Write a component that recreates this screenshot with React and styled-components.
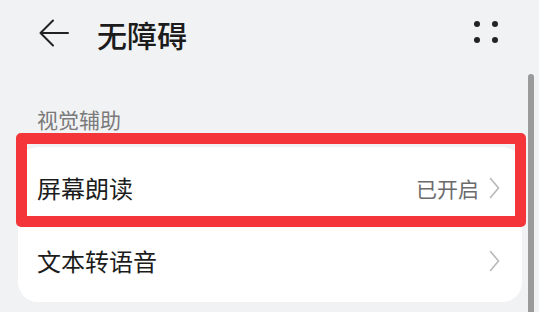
import React from "react"
import styled, { createGlobalStyle } from "styled-components"

const GlobalStyle = createGlobalStyle`
	html, body {
		margin: 0;
		padding: 0;
		background: #f1f2f4;
		font-family: "Noto Sans CJK SC", "Noto Sans", sans-serif;
		overflow: hidden;
	}
`

function App() {
	return (
		<Page>
			<GlobalStyle />
			<Header>
				<BackIcon viewBox="0 0 30 28" aria-hidden="true">
					<path
						d="M14 1.5 L1.5 14 L14 26.5 M1.5 14 H29"
						fill="none"
						stroke="#222"
						strokeWidth="2"
						strokeLinecap="round"
						strokeLinejoin="round"
					/>
				</BackIcon>
				<Title>无障碍</Title>
				<MoreButton aria-label="更多">
					<Dot />
					<Dot />
					<Dot />
					<Dot />
				</MoreButton>
			</Header>

			<SectionLabel>视觉辅助</SectionLabel>

			<CardWrap>
				<Card>
					<Row>
						<RowTitle>屏幕朗读</RowTitle>
						<RowRight>
							<RowValue>已开启</RowValue>
							<Chevron />
						</RowRight>
					</Row>
					<Row>
						<RowTitle>文本转语音</RowTitle>
						<RowRight>
							<Chevron />
						</RowRight>
					</Row>
				</Card>
				<Highlight />
			</CardWrap>

			<ScrollThumb />
		</Page>
	)
}

function Chevron() {
	return (
		<ChevronSvg viewBox="0 0 11 22" aria-hidden="true">
			<path
				d="M1.5 1.5 L9.5 11 L1.5 20.5"
				fill="none"
				stroke="#b8b8b8"
				strokeWidth="1.6"
				strokeLinecap="round"
				strokeLinejoin="round"
			/>
		</ChevronSvg>
	)
}

export default App

const Page = styled.div`
	position: relative;
	width: 539px;
	height: 312px;
	overflow: hidden;
`

const Header = styled.div`
	display: flex;
	align-items: center;
	height: 68px;
	padding: 0 0 0 39px;
`

const BackIcon = styled.svg`
	width: 30px;
	height: 28px;
	margin-top: -2px;
	flex-shrink: 0;
`

const Title = styled.h1`
	margin: 0 0 0 28px;
	font-size: 30px;
	font-weight: 500;
	line-height: 1;
	color: #1c1c1c;
`

const MoreButton = styled.div`
	margin: 0 41px 4px auto;
	display: grid;
	grid-template-columns: 6px 6px;
	column-gap: 12px;
	row-gap: 10px;
`

const Dot = styled.span`
	width: 6px;
	height: 6px;
	border-radius: 50%;
	background: #222;
`

const SectionLabel = styled.div`
	margin: 37px 0 0 37px;
	font-size: 21px;
	line-height: 29px;
	color: #7a7a7a;
`

const CardWrap = styled.div`
	position: relative;
	margin: 13px 17px 0 18px;
`

const Card = styled.div`
	background: #fff;
	border-radius: 20px;
	padding: 4px 0 5px;
`

const Row = styled.div`
	display: flex;
	align-items: center;
	height: 73px;
	padding: 0 22px 0 19px;
`

const RowTitle = styled.span`
	font-size: 24px;
	color: #1c1c1c;
`

const RowRight = styled.div`
	margin-left: auto;
	display: flex;
	align-items: center;
	gap: 10px;
`

const RowValue = styled.span`
	font-size: 21px;
	color: #6b6b6b;
`

const ChevronSvg = styled.svg`
	width: 11px;
	height: 22px;
`

const Highlight = styled.div`
	position: absolute;
	left: -2px;
	right: -4px;
	top: -14px;
	height: 94px;
	box-sizing: border-box;
	border: 11px solid #f4363b;
	border-radius: 5px;
	pointer-events: none;
`

const ScrollThumb = styled.div`
	position: absolute;
	right: 5px;
	top: 74px;
	bottom: 0;
	width: 6px;
	background: #9a9a9a;
	border-radius: 3px 3px 0 0;
`
